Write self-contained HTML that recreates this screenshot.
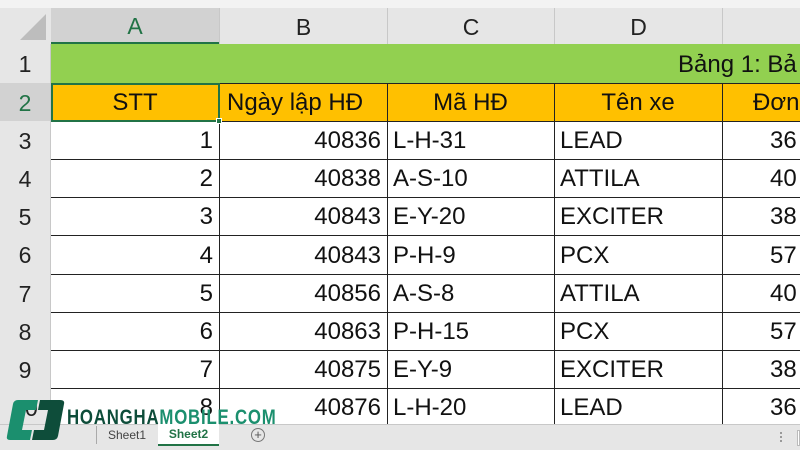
<!DOCTYPE html>
<html><head><meta charset="utf-8"><style>
*{margin:0;padding:0;box-sizing:border-box}
body{width:800px;height:450px;overflow:hidden;background:#fff;position:relative;font-family:"Liberation Sans",sans-serif;color:#111}
.a{position:absolute}
.hdr{background:#e6e6e6;color:#222;font-size:23px;display:flex;align-items:center;justify-content:center;padding-top:2px}
.c{position:absolute;font-size:24px;display:flex;align-items:center;padding:2px 6px 0;white-space:nowrap;overflow:hidden}
.r{justify-content:flex-end}
.m{justify-content:center}
.vl{position:absolute;width:1px;background:#222}
.hl{position:absolute;height:1px;background:#222}
</style></head><body>
<div class="a" style="left:0;top:0;width:800px;height:8px;background:#f3f3f3"></div>
<div class="a hdr" style="left:0;top:8px;width:51px;height:36px;background:#e6e6e6"></div>
<svg class="a" style="left:18px;top:12px" width="30" height="30"><polygon points="28,2 28,28 2,28" fill="#bdbdbd"/></svg>
<div class="a hdr" style="left:51px;top:8px;width:168px;height:36px;background:#d2d2d2;color:#217346;border-bottom:2px solid #217346">A</div>
<div class="a hdr" style="left:219px;top:8px;width:168px;height:36px;border-left:1px solid #c8c8c8">B</div>
<div class="a hdr" style="left:387px;top:8px;width:167px;height:36px;border-left:1px solid #c8c8c8">C</div>
<div class="a hdr" style="left:554px;top:8px;width:168px;height:36px;border-left:1px solid #c8c8c8">D</div>
<div class="a hdr" style="left:722px;top:8px;width:78px;height:36px;border-left:1px solid #c8c8c8"></div>
<div class="a" style="left:0;top:44px;width:51px;height:382px;background:#e6e6e6;border-right:1px solid #c8c8c8"></div>
<div class="a hdr" style="left:0;top:44px;width:50px;height:39px">1</div>
<div class="a hdr" style="left:0;top:83px;width:50px;height:38px;background:#d2d2d2;color:#217346">2</div>
<div class="a hdr" style="left:0;top:121px;width:50px;height:38px">3</div>
<div class="a hdr" style="left:0;top:159px;width:50px;height:38px">4</div>
<div class="a hdr" style="left:0;top:197px;width:50px;height:38px">5</div>
<div class="a hdr" style="left:0;top:235px;width:50px;height:39px">6</div>
<div class="a hdr" style="left:0;top:274px;width:50px;height:38px">7</div>
<div class="a hdr" style="left:0;top:312px;width:50px;height:38px">8</div>
<div class="a hdr" style="left:0;top:350px;width:50px;height:38px">9</div>
<div class="a hdr" style="left:0;top:388px;width:50px;height:38px">10</div>
<div class="c" style="left:51px;top:44px;width:749px;height:39px;background:#92d050;padding-left:627px">Bảng 1: Bả</div>
<div class="a" style="left:51px;top:83px;width:749px;height:38px;background:#ffc000"></div>
<div class="c m" style="left:51px;top:83px;width:168px;height:38px">STT</div>
<div class="c" style="left:219px;top:83px;width:168px;height:38px;padding-left:8px">Ngày lập HĐ</div>
<div class="c m" style="left:387px;top:83px;width:167px;height:38px">Mã HĐ</div>
<div class="c m" style="left:554px;top:83px;width:168px;height:38px">Tên xe</div>
<div class="c" style="left:722px;top:83px;width:78px;height:38px;padding-left:31px">Đơn</div>
<div class="hl" style="left:51px;top:83px;width:749px"></div>
<div class="hl" style="left:51px;top:121px;width:749px"></div>
<div class="hl" style="left:51px;top:159px;width:749px"></div>
<div class="hl" style="left:51px;top:197px;width:749px"></div>
<div class="hl" style="left:51px;top:235px;width:749px"></div>
<div class="hl" style="left:51px;top:274px;width:749px"></div>
<div class="hl" style="left:51px;top:312px;width:749px"></div>
<div class="hl" style="left:51px;top:350px;width:749px"></div>
<div class="hl" style="left:51px;top:388px;width:749px"></div>
<div class="vl" style="left:219px;top:83px;height:343px"></div>
<div class="vl" style="left:387px;top:83px;height:343px"></div>
<div class="vl" style="left:554px;top:83px;height:343px"></div>
<div class="vl" style="left:722px;top:83px;height:343px"></div>
<div class="a" style="left:51px;top:83px;width:169px;height:39px;border:2px solid #217346"></div>
<div class="a" style="left:216px;top:118px;width:6px;height:6px;background:#217346;border:1px solid #fff"></div>
<div class="c r" style="left:51px;top:121px;width:168px;height:38px">1</div><div class="c r" style="left:219px;top:121px;width:168px;height:38px">40836</div><div class="c" style="left:387px;top:121px;width:167px;height:38px">L-H-31</div><div class="c" style="left:554px;top:121px;width:168px;height:38px">LEAD</div><div class="c" style="left:722px;top:121px;width:78px;height:38px;padding-left:48px">36</div>
<div class="c r" style="left:51px;top:159px;width:168px;height:38px">2</div><div class="c r" style="left:219px;top:159px;width:168px;height:38px">40838</div><div class="c" style="left:387px;top:159px;width:167px;height:38px">A-S-10</div><div class="c" style="left:554px;top:159px;width:168px;height:38px">ATTILA</div><div class="c" style="left:722px;top:159px;width:78px;height:38px;padding-left:48px">40</div>
<div class="c r" style="left:51px;top:197px;width:168px;height:38px">3</div><div class="c r" style="left:219px;top:197px;width:168px;height:38px">40843</div><div class="c" style="left:387px;top:197px;width:167px;height:38px">E-Y-20</div><div class="c" style="left:554px;top:197px;width:168px;height:38px">EXCITER</div><div class="c" style="left:722px;top:197px;width:78px;height:38px;padding-left:48px">38</div>
<div class="c r" style="left:51px;top:235px;width:168px;height:39px">4</div><div class="c r" style="left:219px;top:235px;width:168px;height:39px">40843</div><div class="c" style="left:387px;top:235px;width:167px;height:39px">P-H-9</div><div class="c" style="left:554px;top:235px;width:168px;height:39px">PCX</div><div class="c" style="left:722px;top:235px;width:78px;height:39px;padding-left:48px">57</div>
<div class="c r" style="left:51px;top:274px;width:168px;height:38px">5</div><div class="c r" style="left:219px;top:274px;width:168px;height:38px">40856</div><div class="c" style="left:387px;top:274px;width:167px;height:38px">A-S-8</div><div class="c" style="left:554px;top:274px;width:168px;height:38px">ATTILA</div><div class="c" style="left:722px;top:274px;width:78px;height:38px;padding-left:48px">40</div>
<div class="c r" style="left:51px;top:312px;width:168px;height:38px">6</div><div class="c r" style="left:219px;top:312px;width:168px;height:38px">40863</div><div class="c" style="left:387px;top:312px;width:167px;height:38px">P-H-15</div><div class="c" style="left:554px;top:312px;width:168px;height:38px">PCX</div><div class="c" style="left:722px;top:312px;width:78px;height:38px;padding-left:48px">57</div>
<div class="c r" style="left:51px;top:350px;width:168px;height:38px">7</div><div class="c r" style="left:219px;top:350px;width:168px;height:38px">40875</div><div class="c" style="left:387px;top:350px;width:167px;height:38px">E-Y-9</div><div class="c" style="left:554px;top:350px;width:168px;height:38px">EXCITER</div><div class="c" style="left:722px;top:350px;width:78px;height:38px;padding-left:48px">38</div>
<div class="c r" style="left:51px;top:388px;width:168px;height:38px">8</div><div class="c r" style="left:219px;top:388px;width:168px;height:38px">40876</div><div class="c" style="left:387px;top:388px;width:167px;height:38px">L-H-20</div><div class="c" style="left:554px;top:388px;width:168px;height:38px">LEAD</div><div class="c" style="left:722px;top:388px;width:78px;height:38px;padding-left:48px">36</div>
<div class="a" style="left:0;top:424px;width:800px;height:26px;background:#e6e6e6;border-top:1px solid #c8c8c8"></div>
<div class="a" style="left:96px;top:426px;width:1px;height:18px;background:#aaa"></div>
<div class="a" style="left:108px;top:428px;font-size:12px;color:#444">Sheet1</div>
<div class="a" style="left:158px;top:424px;width:61px;height:22px;background:#fff;border-bottom:2px solid #217346;font-size:12px;color:#217346;font-weight:bold;text-align:center;line-height:20px">Sheet2</div>
<div class="a" style="left:251px;top:428px;width:14px;height:14px;border:1px solid #777;border-radius:50%;font-size:13px;line-height:11px;text-align:center;color:#555">+</div>
<div class="a" style="left:780px;top:432px;width:2px;height:10px;border-left:2px dotted #999"></div>
<div class="a" style="left:797px;top:430px;width:3px;height:16px;background:#fff;border:1px solid #bbb"></div>
<svg class="a" style="left:6px;top:398px" width="60" height="46">
<path d="M10 2 H32 L30 12 H20 L16 32 H26 L24 42 H4 Q0 42 1 38 L7 6 Q8 2 12 2Z" fill="#1b8f6e"/>
<path d="M34 2 H54 Q59 2 58 6 L52 38 Q51 42 47 42 H26 L28 32 H38 L42 12 H32Z" fill="#0e4d3a"/>
</svg>
<div class="a" style="left:67px;top:406px;font-size:21px;font-weight:bold;letter-spacing:1px;transform:scaleX(0.8);transform-origin:left;white-space:nowrap"><span style="color:#0e4d3a">HOANGHA</span><span style="color:#1b8f6e">MOBILE.COM</span></div>
</body></html>
